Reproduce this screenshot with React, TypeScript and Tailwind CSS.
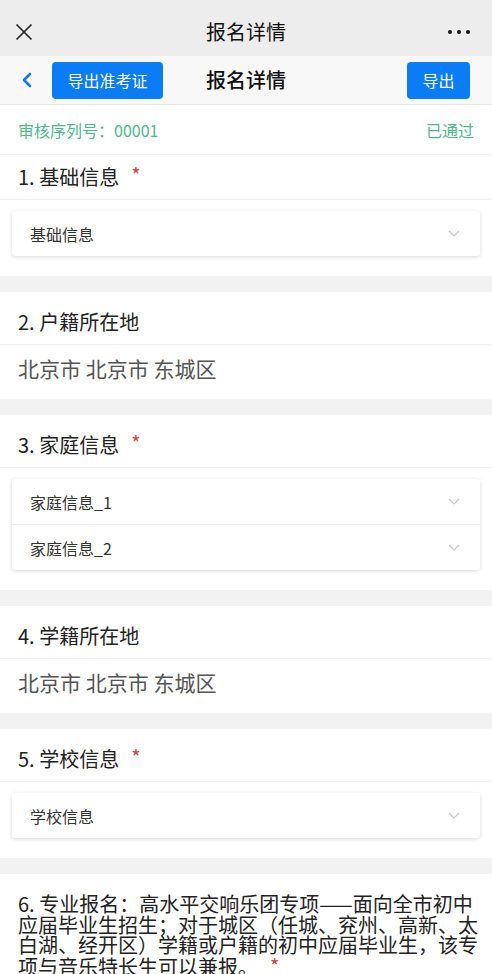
const font = { fontFamily: '"Noto Sans CJK SC", "Noto Sans", sans-serif' };

function Chevron() {
  return (
    <svg width="12" height="7" viewBox="0 0 12 7" fill="none">
      <polyline points="1,1 6,6 11,1" stroke="#c9c9c9" strokeWidth="1.2" />
    </svg>
  );
}

function Star() {
  return <span className="ml-[12px] mb-[4px] text-[20px] leading-none text-[#e23b3b]">*</span>;
}

function Heading({ text, required, first }: { text: string; required?: boolean; first?: boolean }) {
  return (
    <div
      className={
        first
          ? 'flex h-[45px] items-center border-b border-[#f0f0f0] px-[18px]'
          : 'flex h-[53px] items-center border-b border-[#f0f0f0] px-[18px] pt-[8px]'
      }
    >
      <span className="text-[20px] text-[#222]">{text}</span>
      {required && <Star />}
    </div>
  );
}

function Card({ rows }: { rows: string[] }) {
  return (
    <div className="px-[12px] pt-[11px] pb-[20px]">
      <div className="rounded-[3px] bg-white shadow-[0_1px_4px_rgba(0,0,0,0.16)]">
        {rows.map((r, i) => (
          <div
            key={r}
            className={
              i > 0
                ? 'flex h-[46px] items-center justify-between border-t border-[#ececec] pl-[18px] pr-[20px]'
                : 'flex h-[45px] items-center justify-between pl-[18px] pr-[20px]'
            }
          >
            <span className="text-[16px] text-[#333]">{r}</span>
            <Chevron />
          </div>
        ))}
      </div>
    </div>
  );
}

function Value({ text }: { text: string }) {
  return (
    <div className="px-[18px] pt-[9px] pb-[17px]">
      <div className="text-[21px] leading-[28px] text-[#555]">{text}</div>
    </div>
  );
}

export default function App() {
  return (
    <div className="min-h-screen bg-[#f2f2f2]" style={font}>
      <div className="grid h-[56px] grid-cols-[1fr_auto_1fr] items-center bg-[#ededed] pt-[8px]">
        <div className="pl-[15px]">
          <svg width="18" height="18" viewBox="0 0 18 18" fill="none">
            <path d="M1.5 1.5 L16.5 16.5 M16.5 1.5 L1.5 16.5" stroke="#222" strokeWidth="1.6" />
          </svg>
        </div>
        <div className="text-[20px] text-[#111]">报名详情</div>
        <div className="flex justify-end gap-[5px] pr-[22px]">
          <span className="h-[4px] w-[4px] rounded-full bg-[#111]" />
          <span className="h-[4px] w-[4px] rounded-full bg-[#111]" />
          <span className="h-[4px] w-[4px] rounded-full bg-[#111]" />
        </div>
      </div>

      <div className="grid h-[49px] grid-cols-[1fr_auto_1fr] items-center border-b border-[#e6e6e6] bg-[#f8f8f8] shadow-[0_1px_2px_rgba(0,0,0,0.05)]">
        <div className="flex items-center">
          <svg className="ml-[21px]" width="12" height="16" viewBox="0 0 12 16" fill="none">
            <polyline points="9,2 3,8 9,14" stroke="#1677e8" strokeWidth="2.6" strokeLinecap="round" strokeLinejoin="round" />
          </svg>
          <button className="ml-[19px] h-[37px] w-[111px] rounded-[4px] bg-[#0a7cf5] text-[16px] text-white">
            导出准考证
          </button>
        </div>
        <div className="text-[20px] font-medium text-[#111]">报名详情</div>
        <div className="flex justify-end pr-[22px]">
          <button className="h-[37px] w-[63px] rounded-[4px] bg-[#0a7cf5] text-[16px] text-white">导出</button>
        </div>
      </div>

      <div className="bg-white">
        <div className="flex h-[50px] items-center justify-between border-b border-[#f0f0f0] px-[18px] text-[16px] text-[#4db88b]">
          <span>审核序列号：00001</span>
          <span>已通过</span>
        </div>
        <Heading text="1. 基础信息" required first />
        <Card rows={['基础信息']} />
      </div>

      <div className="mt-[16px] bg-white">
        <Heading text="2. 户籍所在地" />
        <Value text="北京市 北京市 东城区" />
      </div>

      <div className="mt-[16px] bg-white">
        <Heading text="3. 家庭信息" required />
        <Card rows={['家庭信息_1', '家庭信息_2']} />
      </div>

      <div className="mt-[16px] bg-white">
        <Heading text="4. 学籍所在地" />
        <Value text="北京市 北京市 东城区" />
      </div>

      <div className="mt-[16px] bg-white">
        <Heading text="5. 学校信息" required />
        <Card rows={['学校信息']} />
      </div>

      <div className="mt-[16px] bg-white px-[18px] pt-[20px] pb-[20px] text-[20px] leading-[20.5px] text-[#222]">
        <div className="whitespace-nowrap">6. 专业报名：高水平交响乐团专项——面向全市初中</div>
        <div className="whitespace-nowrap">应届毕业生招生；对于城区（任城、兖州、高新、太</div>
        <div className="whitespace-nowrap">白湖、经开区）学籍或户籍的初中应届毕业生，该专</div>
        <div className="flex items-center whitespace-nowrap">
          项与音乐特长生可以兼报。
          <Star />
        </div>
      </div>
    </div>
  );
}
